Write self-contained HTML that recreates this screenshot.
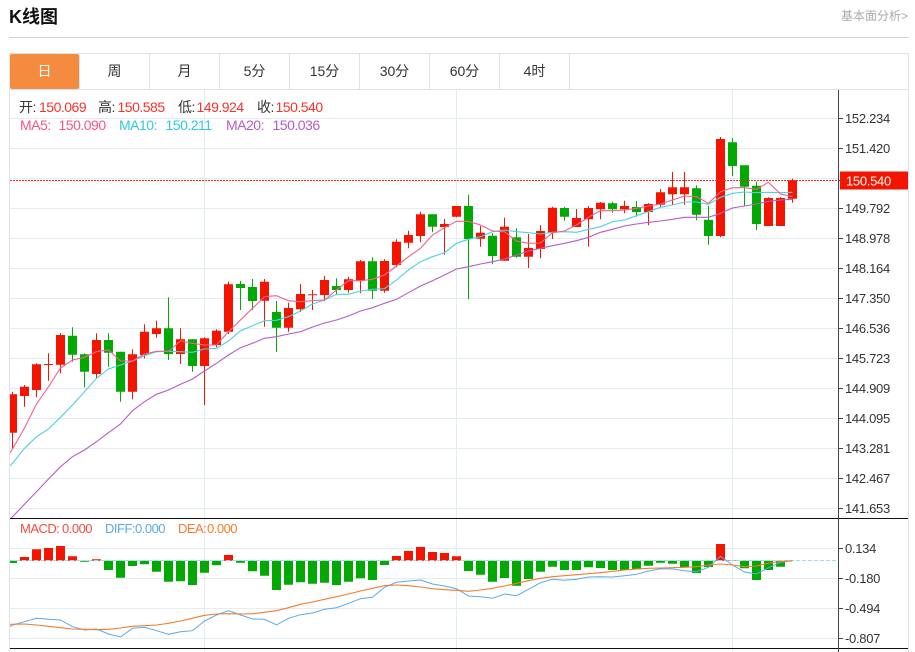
<!DOCTYPE html>
<html lang="zh">
<head>
<meta charset="utf-8">
<title>K线图</title>
<style>
html,body{margin:0;padding:0;background:#fff;width:915px;height:652px;overflow:hidden}
body{position:relative;font-family:"Liberation Sans","Noto Sans CJK SC",sans-serif}
.a{position:absolute;white-space:nowrap;line-height:16px}
.i{font-size:14px;letter-spacing:-.5px;top:99px}
.m{font-size:14px;letter-spacing:-.5px;top:117px}
.d{font-size:13px;letter-spacing:-.5px;top:521px}
.tab{position:absolute;top:54px;width:70px;height:35px;line-height:35px;text-align:center;font-size:14px;color:#333;box-sizing:border-box}
svg{position:absolute;left:0;top:0}
svg text{font-family:"Liberation Sans",sans-serif;font-size:13px;letter-spacing:-.3px;fill:#333}
</style>
</head>
<body>
<div class="a" style="left:9px;top:6px;font-size:18px;line-height:22px;font-weight:bold;color:#111">K线图</div>
<div class="a" style="left:841px;top:8px;font-size:12px;color:#aaa">基本面分析&gt;</div>
<div style="position:absolute;left:9px;top:37px;width:900px;height:1px;background:#d0d0d0"></div>
<div style="position:absolute;left:9px;top:53px;width:900px;height:599px;box-sizing:border-box;border:1px solid #dde3e8;border-bottom:0"></div>
<div style="position:absolute;left:10px;top:89px;width:898px;height:1px;background:#dde3e8"></div>
<div class="tab" style="left:10px;width:69px;background:#f58b3f;color:#fff;border-radius:2px">日</div>
<div class="tab" style="left:80px;border-right:1px solid #dde3e8">周</div>
<div class="tab" style="left:150px;border-right:1px solid #dde3e8">月</div>
<div class="tab" style="left:220px;border-right:1px solid #dde3e8">5分</div>
<div class="tab" style="left:290px;border-right:1px solid #dde3e8">15分</div>
<div class="tab" style="left:360px;border-right:1px solid #dde3e8">30分</div>
<div class="tab" style="left:430px;border-right:1px solid #dde3e8">60分</div>
<div class="tab" style="left:500px;border-right:1px solid #dde3e8">4时</div>
<div style="position:absolute;left:79px;top:54px;width:1px;height:35px;background:#dde3e8"></div>
<div style="position:absolute;left:149px;top:54px;width:1px;height:35px;background:#dde3e8"></div>

<svg width="915" height="652" viewBox="0 0 915 652">
<defs><clipPath id="c"><rect x="10" y="90" width="828" height="562"/></clipPath></defs>
<path stroke="#e2ecf3" stroke-width="1" fill="none" d="M10 118.5H838M10 148.5H838M10 178.5H838M10 208.5H838M10 238.5H838M10 268.5H838M10 298.5H838M10 328.5H838M10 358.5H838M10 388.5H838M10 418.5H838M10 448.5H838M10 478.5H838M10 508.5H838M10 548.5H838M10 578.5H838M10 608.5H838M10 638.5H838M204.5 90V652M456.5 90V652M732.5 90V652"/>
<g clip-path="url(#c)">
<!-- red wicks -->
<path stroke="#f41500" stroke-width="1" fill="none" d="M12.5 391.7V448.3M24.5 385V406.7M36.5 363.3V397.3M48.5 353.3V380.7M60.5 333.3V373.3M96.5 333.3V378.3M132.5 349.3V399.3M144.5 324.3V358.3M156.5 320.7V337.7M180.5 328.3V364M204.5 337.3V405M216.5 329.3V347.3M228.5 281.7V334M264.5 279V326.7M288.5 302.7V331.7M300.5 284V312M312.5 290V310M324.5 276V301M348.5 276.7V292.7M360.5 260V293.3M384.5 259.3V292.7M396.5 239.3V267.3M408.5 230.7V248.3M420.5 211.7V242.3M444.5 219V254.7M456.5 206V217.3M480.5 226V246.7M504.5 217.7V260.7M528.5 234V268M540.5 225.3V258.3M552.5 206.7V239M576.5 209V227M588.5 206V246.7M600.5 202V219.3M624.5 200.7V213.3M648.5 203.3V225.3M660.5 189V206.7M672.5 172V205M684.5 172V205M720.5 137V237.3M768.5 197.3V226M780.5 197.3V226M792.5 178.7V202.7"/>
<!-- green wicks -->
<path stroke="#02a902" stroke-width="1" fill="none" d="M72.5 327.3V361.7M84.5 353.3V387.3M108.5 333.3V366.7M120.5 351.7V401.7M168.5 297.3V360M192.5 339.3V371.7M240.5 281V310M252.5 279V310M276.5 301V351.7M336.5 278.3V295M372.5 257.3V299M432.5 214.3V232.3M468.5 194.7V299.3M492.5 233.3V264.3M516.5 228.3V257.7M564.5 206.7V220.7M612.5 201.7V212.7M636.5 201V216.7M696.5 185.3V220.3M708.5 206V244.7M732.5 138V176M744.5 165.3V206M756.5 181.7V230"/>
<!-- red bodies -->
<path fill="#f41500" d="M8 394.3h9v38.4h-9zM20 386.7h9v9.3h-9zM32 364.3h9v25.7h-9zM44 364h9v1h-9zM56 335h9v29.7h-9zM92 340h9v34h-9zM128 354.3h9v37.4h-9zM140 331.7h9v23.3h-9zM152 328.3h9v5.7h-9zM176 339.3h9v14.7h-9zM200 338.3h9v27.7h-9zM212 330.7h9v14.3h-9zM224 284.3h9v47.4h-9zM260 281.7h9v19h-9zM284 308h9v19.7h-9zM296 294h9v15.3h-9zM308 294.3h9v1h-9zM320 280h9v15h-9zM344 279.3h9v10.7h-9zM356 261.3h9v19.4h-9zM380 261h9v29.7h-9zM392 241.7h9v23.3h-9zM404 235h9v7.7h-9zM416 214.3h9v21.7h-9zM440 224h9v3h-9zM452 206h9v10.7h-9zM476 232.7h9v6h-9zM500 226.7h9v34h-9zM524 248h9v8.7h-9zM536 231h9v18h-9zM548 207.7h9v24.6h-9zM572 218h9v9h-9zM584 208h9v11.3h-9zM596 202.7h9v6.6h-9zM620 206h9v3.3h-9zM644 204h9v8h-9zM656 192.3h9v12.4h-9zM668 187.3h9v7h-9zM680 187.3h9v7h-9zM716 139h9v97h-9zM764 198h9v28h-9zM776 198h9v28h-9zM788 180.3h9v18.4h-9z"/>
<!-- green bodies -->
<path fill="#02a902" d="M68 335.7h9v19h-9zM80 354.3h9v17.4h-9zM104 340h9v12.7h-9zM116 351.7h9v40h-9zM164 328.3h9v25.7h-9zM188 339.3h9v26.7h-9zM236 284h9v4h-9zM248 287h9v14h-9zM272 312h9v15.7h-9zM332 286h9v4h-9zM368 261.3h9v29.4h-9zM428 214.3h9v12.4h-9zM464 206h9v33h-9zM488 235.7h9v20.3h-9zM512 237.3h9v19.4h-9zM560 208h9v8.7h-9zM608 203.3h9v6h-9zM632 207h9v5h-9zM692 188.3h9v26.4h-9zM704 219.7h9v16.3h-9zM728 142.3h9v23.7h-9zM740 165.3h9v21.4h-9zM752 185.7h9v38.3h-9z"/>
<!-- MA20 -->
<polyline fill="none" stroke="#b65cc8" stroke-width="1.1" points="10 519 12.5 516.7 24.5 504.3 36.5 491.7 48.5 479 60.5 466.7 72.5 456.7 84.5 450 96.5 441.7 108.5 432.7 120.5 424 132.5 410.7 144.5 401.7 156.5 394.3 168.5 390 180.5 384.3 192.5 379 204.5 371 216.5 363.3 228.5 355 240.5 347.7 252.5 343.3 264.5 338.3 276.5 336.7 288.5 334 300.5 331.7 312.5 327 324.5 323 336.5 320 348.5 316 360.5 311 372.5 307.7 384.5 303.3 396.5 299.3 408.5 292.7 420.5 286 432.5 280.7 444.5 275 456.5 269 468.5 266.7 480.5 264 492.5 261.7 504.5 259 516.5 255 528.5 251 540.5 248.3 552.5 245.7 564.5 243.3 576.5 240.7 588.5 237.3 600.5 232.3 612.5 229.3 624.5 226 636.5 224 648.5 222.3 660.5 221 672.5 219.3 684.5 217.3 696.5 217.3 708.5 217.3 720.5 213.3 732.5 208 744.5 206 756.5 204 768.5 201.3 780.5 200 792.5 199.3"/>
<!-- MA10 -->
<polyline fill="none" stroke="#4fd0e4" stroke-width="1.1" points="10 466 12.5 463.3 24.5 448.3 36.5 436.7 48.5 429 60.5 417.3 72.5 405 84.5 391.7 96.5 378.3 108.5 369 120.5 365 132.5 361 144.5 355.7 156.5 351.7 168.5 351.3 180.5 351.7 192.5 352.3 204.5 349 216.5 348.3 228.5 341 240.5 330.7 252.5 325.7 264.5 320.7 276.5 320.3 288.5 316.7 300.5 311 312.5 304 324.5 300 336.5 294.3 348.5 294.3 360.5 291 372.5 289.3 384.5 288.7 396.5 280 408.5 270 420.5 261.7 432.5 256.7 444.5 252.7 456.5 243.3 468.5 239.3 480.5 236.7 492.5 231.7 504.5 230 516.5 231.7 528.5 232.7 540.5 234 552.5 232.3 564.5 231.7 576.5 232.3 588.5 229.3 600.5 226.7 612.5 221.7 624.5 220 636.5 215.7 648.5 211.7 660.5 207.3 672.5 205 684.5 202 696.5 202 708.5 204.3 720.5 197.3 732.5 193.3 744.5 192 756.5 192.7 768.5 192.3 780.5 192.7 792.5 192.3"/>
<!-- MA5 -->
<polyline fill="none" stroke="#f4608c" stroke-width="1.1" points="10 453 12.5 449 24.5 428 36.5 404 48.5 386.7 60.5 368 72.5 360 84.5 357.3 96.5 351.7 108.5 350 120.5 361 132.5 361 144.5 354 156.5 351.3 168.5 351.3 180.5 341 192.5 343.3 204.5 345 216.5 345 228.5 331.7 240.5 320 252.5 308.3 264.5 296.7 276.5 295.7 288.5 300.7 300.5 301.7 312.5 300.7 324.5 300 336.5 290 348.5 280.7 360.5 280.7 372.5 279.3 384.5 275 396.5 266 408.5 256.7 420.5 248.3 432.5 235 444.5 227.7 456.5 221.3 468.5 221.3 480.5 225 492.5 231 504.5 231.7 516.5 241 528.5 243.3 540.5 243 552.5 232.7 564.5 231 576.5 225 588.5 217.3 600.5 210.7 612.5 210.7 624.5 210 636.5 208.3 648.5 206 660.5 204 672.5 200 684.5 196 696.5 196.7 708.5 203.3 720.5 191.7 732.5 187.7 744.5 187.7 756.5 189.3 768.5 182.3 780.5 194 792.5 196.7"/>
<!-- MACD bars -->
<path fill="#f41500" d="M20 557h9v3.7h-9zM32 549.3h9v11.4h-9zM44 548h9v12.7h-9zM56 546h9v14.7h-9zM68 556.3h9v4.4h-9zM92 559.3h9v1.4h-9zM224 555h9v5.7h-9zM392 556h9v4.7h-9zM404 551h9v9.7h-9zM416 547h9v13.7h-9zM428 552h9v8.7h-9zM440 553h9v7.7h-9zM452 556.3h9v4.4h-9zM716 544h9v16.7h-9zM728 560.2h9v.6h-9z"/>
<path fill="#02a902" d="M8 560.7h9V563h-9zM80 560.7h9v1h-9zM104 560.7h9V570h-9zM116 560.7h9v17h-9zM128 560.7h9V566h-9zM140 560.7h9v3.6h-9zM152 560.7h9v11h-9zM164 560.7h9v21h-9zM176 560.7h9v20.6h-9zM188 560.7h9V585h-9zM200 560.7h9v12h-9zM212 560.7h9v4.6h-9zM236 560.7h9v2h-9zM248 560.7h9v10.6h-9zM260 560.7h9v15h-9zM272 560.7h9V590h-9zM284 560.7h9v24h-9zM296 560.7h9v21.6h-9zM308 560.7h9v23h-9zM320 560.7h9v22h-9zM332 560.7h9V585h-9zM344 560.7h9v21h-9zM356 560.7h9v17.6h-9zM368 560.7h9V580h-9zM380 560.7h9v4.3h-9zM464 560.7h9V571h-9zM476 560.7h9v14h-9zM488 560.7h9v21h-9zM500 560.7h9V578h-9zM512 560.7h9v25h-9zM524 560.7h9V579h-9zM536 560.7h9v11h-9zM548 560.7h9v6h-9zM560 560.7h9V570h-9zM572 560.7h9V570h-9zM584 560.7h9v6.6h-9zM596 560.7h9V568h-9zM608 560.7h9V570h-9zM620 560.7h9V570h-9zM632 560.7h9v8.6h-9zM644 560.7h9v5h-9zM656 560.7h9v2h-9zM668 560.7h9v3h-9zM680 560.7h9v6.6h-9zM692 560.7h9V573h-9zM704 560.7h9V567h-9zM740 560.7h9v7.6h-9zM752 560.7h9V580h-9zM764 560.7h9V570h-9zM776 560.7h9v6h-9z"/>
<path stroke="#9fdcf0" stroke-width="1" stroke-dasharray="4 2" fill="none" d="M10 560.5H836"/>
<!-- DIFF -->
<polyline fill="none" stroke="#5aa9ee" stroke-width="1" points="10 626.7 12.5 625 24.5 621.7 36.5 618.3 48.5 619.3 60.5 620 72.5 626.7 84.5 630 96.5 629 108.5 634 120.5 637 132.5 628.3 144.5 627.3 156.5 630.7 168.5 634.3 180.5 631.7 192.5 630.7 204.5 621 216.5 615 228.5 610.7 240.5 615 252.5 619 264.5 619.3 276.5 625 288.5 618.3 300.5 614.7 312.5 613 324.5 609.3 336.5 607.7 348.5 603.3 360.5 598.7 372.5 597.3 384.5 587.3 396.5 582.3 408.5 581 420.5 580 432.5 584 444.5 586 456.5 588.7 468.5 596 480.5 596.7 492.5 598.3 504.5 594 516.5 595.7 528.5 589.3 540.5 582.7 552.5 579.3 564.5 580.3 576.5 579.3 588.5 577 600.5 576.7 612.5 577 624.5 575.7 636.5 574.3 648.5 571 660.5 568.7 672.5 569 684.5 570.7 696.5 571.7 708.5 567.3 720.5 556.3 732.5 565 744.5 572 756.5 574 768.5 567.7 780.5 562.3 792.5 560.7"/>
<!-- DEA -->
<polyline fill="none" stroke="#f57c2a" stroke-width="1.1" points="10 624.3 12.5 624.3 24.5 624 36.5 625 48.5 626.3 60.5 627.7 72.5 629 84.5 629.3 96.5 629.7 108.5 629.3 120.5 628 132.5 626.3 144.5 625.7 156.5 625 168.5 623.3 180.5 621 192.5 618.3 204.5 615.3 216.5 614 228.5 613.7 240.5 614 252.5 613.7 264.5 612.3 276.5 610.7 288.5 607.7 300.5 604.3 312.5 602 324.5 599.3 336.5 596.7 348.5 594 360.5 591 372.5 588.3 384.5 585.7 396.5 585 408.5 585.7 420.5 587 432.5 588.7 444.5 589.7 456.5 590.3 468.5 591.3 480.5 590 492.5 588.3 504.5 586 516.5 583.3 528.5 580.7 540.5 578.3 552.5 576.7 564.5 575.7 576.5 574.7 588.5 573.7 600.5 572.7 612.5 571.3 624.5 570 636.5 569 648.5 568.3 660.5 568 672.5 567.7 684.5 567.3 696.5 566.7 708.5 565 720.5 564 732.5 565 744.5 566.7 756.5 566 768.5 563 780.5 561.7 792.5 560.7"/>
</g>
<!-- price line -->
<path stroke="#f22" stroke-width="1" stroke-dasharray="2 1" fill="none" d="M10 180.5H838"/>
<!-- frame lines -->
<path stroke="#111" stroke-width="1" fill="none" d="M10 518.5H908M10 648.5H908"/>
<path stroke="#444" stroke-width="1" fill="none" d="M838.5 90V652M838 118.5h5M838 148.5h5M838 180.5h5M838 208.5h5M838 238.5h5M838 268.5h5M838 298.5h5M838 328.5h5M838 358.5h5M838 388.5h5M838 418.5h5M838 448.5h5M838 478.5h5M838 508.5h5M838 548.5h5M838 578.5h5M838 608.5h5M838 638.5h5"/>
<rect x="840" y="171.5" width="68" height="18" fill="#f41500"/>
<text x="846" y="185.5" style="fill:#fff">150.540</text>
<text x="845" y="123">152.234</text>
<text x="845" y="153">151.420</text>
<text x="845" y="213">149.792</text>
<text x="845" y="243">148.978</text>
<text x="845" y="273">148.164</text>
<text x="845" y="303">147.350</text>
<text x="845" y="333">146.536</text>
<text x="845" y="363">145.723</text>
<text x="845" y="393">144.909</text>
<text x="845" y="423">144.095</text>
<text x="845" y="453">143.281</text>
<text x="845" y="483">142.467</text>
<text x="845" y="513">141.653</text>
<text x="845" y="553">0.134</text>
<text x="845" y="583">-0.180</text>
<text x="845" y="613">-0.494</text>
<text x="845" y="643">-0.807</text>
</svg>

<div class="a i" style="left:19px;color:#333">开:</div>
<div class="a i" style="left:39px;color:#f5332a">150.069</div>
<div class="a i" style="left:98px;color:#333">高:</div>
<div class="a i" style="left:117.5px;color:#f5332a">150.585</div>
<div class="a i" style="left:178px;color:#333">低:</div>
<div class="a i" style="left:196.5px;color:#f5332a">149.924</div>
<div class="a i" style="left:257px;color:#333">收:</div>
<div class="a i" style="left:275.5px;color:#f5332a">150.540</div>

<div class="a m" style="left:20px;color:#f4587f">MA5:</div>
<div class="a m" style="left:58.5px;color:#f4587f">150.090</div>
<div class="a m" style="left:119px;color:#2ecbe0">MA10:</div>
<div class="a m" style="left:165.5px;color:#2ecbe0">150.211</div>
<div class="a m" style="left:226px;color:#b65cc8">MA20:</div>
<div class="a m" style="left:272.5px;color:#b65cc8">150.036</div>

<div class="a d" style="left:20px;color:#f44b3f">MACD:</div>
<div class="a d" style="left:62px;color:#f44b3f">0.000</div>
<div class="a d" style="left:105px;color:#5aa9ee">DIFF:</div>
<div class="a d" style="left:135px;color:#5aa9ee">0.000</div>
<div class="a d" style="left:178px;color:#f57c2a">DEA:</div>
<div class="a d" style="left:207px;color:#f57c2a">0.000</div>
</body>
</html>
